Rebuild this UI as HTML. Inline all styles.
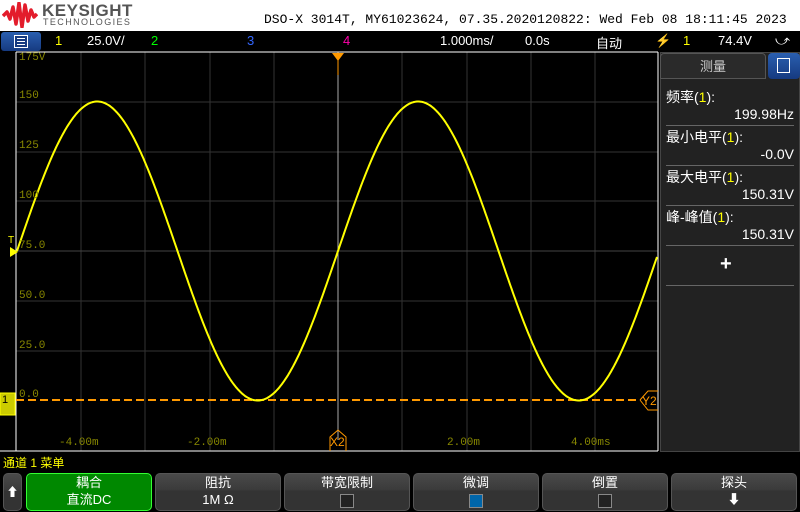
<!DOCTYPE html>
<html><head><meta charset="utf-8"><style>
*{margin:0;padding:0;box-sizing:border-box}
body{width:800px;height:512px;background:#000;position:relative;overflow:hidden;font-family:"Liberation Sans","Noto Sans CJK SC",sans-serif;color:#fff}
.a{position:absolute;white-space:nowrap}
.mono{font-family:"Liberation Mono","Noto Sans CJK SC",monospace}
.btn{position:absolute;top:473px;height:38px;background:linear-gradient(#4a4a4a,#3a3a3a 45%,#333 46%,#333);border:1px solid #555;border-radius:5px;text-align:center;font-size:13px;line-height:17px;color:#fff}
.chk{display:inline-block;width:14px;height:14px;border:1px solid #888;background:#222;vertical-align:middle}
.m{font-size:14px;position:absolute;left:666px}
.r{font-size:14px;position:absolute;right:6px}
.sep{position:absolute;left:666px;width:128px;height:1px;background:#666}
.lb{font-size:11px;color:#880}
</style></head><body>
<div class="a" style="left:0;top:0;width:800px;height:31px;background:#fff"></div>
<svg class="a" style="left:2px;top:2px" width="36" height="26" viewBox="0 0 34 26"><path d="M0 14 L4 10 L7 17 L10 5 L13 22 L16 1 L19 25 L22 3 L25 19 L28 8 L31 15 L34 12" stroke="#e31c2b" stroke-width="3.5" fill="none" stroke-linejoin="round"/></svg>
<div class="a" style="left:42px;top:1px;font-size:17px;font-weight:bold;color:#555;letter-spacing:0.5px">KEYSIGHT</div>
<div class="a" style="left:43px;top:17px;font-size:9px;color:#555;letter-spacing:1.4px">TECHNOLOGIES</div>
<div class="a mono" style="left:264px;top:12px;font-size:13px;color:#000">DSO-X 3014T, MY61023624, 07.35.2020120822: Wed Feb 08 18:11:45 2023</div>
<!-- top bar -->
<div class="a" style="left:1px;top:32px;width:40px;height:19px;background:linear-gradient(#2a5fb0,#163a80);border-radius:3px"></div>
<div class="a" style="left:14px;top:35px;width:14px;height:13px;border:1.5px solid #fff;background:#163a80"></div>
<div class="a" style="left:17px;top:38px;width:8px;height:7px;border-top:1px solid #fff;border-bottom:1px solid #fff"></div>
<div class="a" style="left:17px;top:41px;width:8px;height:1px;background:#fff"></div>
<div class="a" style="left:55px;top:33px;font-size:13px;color:#ff0">1</div>
<div class="a" style="left:87px;top:33px;font-size:13px">25.0V/</div>
<div class="a" style="left:151px;top:33px;font-size:13px;color:#0f0">2</div>
<div class="a" style="left:247px;top:33px;font-size:13px;color:#36f">3</div>
<div class="a" style="left:343px;top:33px;font-size:13px;color:#f0a">4</div>
<div class="a" style="left:440px;top:33px;font-size:13px">1.000ms/</div>
<div class="a" style="left:525px;top:33px;font-size:13px">0.0s</div>
<div class="a" style="left:596px;top:33px;font-size:13px">自动</div>
<div class="a" style="left:655px;top:33px;font-size:13px;color:#ff0">⚡</div>
<div class="a" style="left:683px;top:33px;font-size:13px;color:#ff0">1</div>
<div class="a" style="left:718px;top:33px;font-size:13px">74.4V</div>
<div class="a" style="left:775px;top:32px;font-size:14px">⤻</div>
<!-- plot -->
<svg class="a" style="left:0;top:0" width="800" height="512">
<g stroke="#333" stroke-width="1">
<line x1="81" y1="52" x2="81" y2="451"/><line x1="145" y1="52" x2="145" y2="451"/><line x1="210" y1="52" x2="210" y2="451"/><line x1="274" y1="52" x2="274" y2="451"/><line x1="402" y1="52" x2="402" y2="451"/><line x1="467" y1="52" x2="467" y2="451"/><line x1="531" y1="52" x2="531" y2="451"/><line x1="595" y1="52" x2="595" y2="451"/>
<line x1="16" y1="102" x2="658" y2="102"/><line x1="16" y1="152" x2="658" y2="152"/><line x1="16" y1="201" x2="658" y2="201"/><line x1="16" y1="301" x2="658" y2="301"/><line x1="16" y1="351" x2="658" y2="351"/>
<line x1="16" y1="251" x2="658" y2="251" stroke="#444"/>
</g>
<line x1="338" y1="52" x2="338" y2="440" stroke="#aaa"/>
<line x1="338" y1="52" x2="338" y2="75" stroke="#f90"/>
<polygon points="332,53 344,53 338,61" fill="#f90"/>
<line x1="16" y1="52" x2="658" y2="52" stroke="#fff"/>
<line x1="16" y1="52" x2="16" y2="451" stroke="#fff"/>
<line x1="658" y1="52" x2="658" y2="451" stroke="#fff"/>
<line x1="0" y1="451" x2="658" y2="451" stroke="#fff"/>
<line x1="16" y1="400" x2="640" y2="400" stroke="#f90" stroke-width="2" stroke-dasharray="8,4"/>
<polyline id="w" fill="none" stroke="#ff0" stroke-width="2"/>
<polygon points="10,247 18,252 10,257" fill="#ff0"/>
<path d="M640 400 L648 391 L658 391 M640 400 L648 410 L658 410" stroke="#f90" fill="none"/>
<path d="M330 451 L330 437 L338 430 L346 437 L346 451" stroke="#f90" fill="none"/>
<rect x="0" y="393" width="15" height="22" fill="#cc0" stroke="#ff0"/>
</svg>
<script>
var p=[];for(var x=17;x<=657;x++){var y=251-149.5*Math.sin(2*Math.PI*(x-338)/321);p.push(x+","+y.toFixed(1));}
document.getElementById('w').setAttribute('points',p.join(' '));
</script>
<div class="a mono lb" style="left:19px;top:52px">175V</div>
<div class="a mono lb" style="left:19px;top:90px">150</div>
<div class="a mono lb" style="left:19px;top:140px">125</div>
<div class="a mono lb" style="left:19px;top:190px">100</div>
<div class="a mono lb" style="left:19px;top:240px">75.0</div>
<div class="a mono lb" style="left:19px;top:290px">50.0</div>
<div class="a mono lb" style="left:19px;top:340px">25.0</div>
<div class="a mono lb" style="left:19px;top:389px">0.0</div>
<div class="a" style="left:8px;top:235px;font-size:10px;color:#ff0">T</div>
<div class="a" style="left:2px;top:394px;font-size:11px;color:#000">1</div>
<div class="a mono lb" style="left:59px;top:437px">-4.00m</div>
<div class="a mono lb" style="left:187px;top:437px">-2.00m</div>
<div class="a mono lb" style="left:447px;top:437px">2.00m</div>
<div class="a mono lb" style="left:571px;top:437px">4.00ms</div>
<div class="a" style="left:330px;top:435px;font-size:12px;color:#f90">X2</div>
<div class="a" style="left:642px;top:394px;font-size:12px;color:#f90">Y2</div>
<!-- right panel -->
<div class="a" style="left:660px;top:52px;width:140px;height:400px;background:#222;border:1px solid #444"></div>
<div class="a" style="left:660px;top:53px;width:106px;height:26px;background:#2a2a2a;border:1px solid #555;border-radius:4px 4px 0 0;text-align:center;font-size:13px;line-height:26px;color:#ccc">测量</div>
<div class="a" style="left:768px;top:53px;width:32px;height:26px;background:linear-gradient(#2a5fb0,#163a80);border-radius:4px"></div>
<div class="a" style="left:777px;top:58px;width:13px;height:15px;border:1.5px solid #fff"></div>
<div class="m" style="top:87px">频率(<span style="color:#ff0">1</span>):</div>
<div class="r" style="top:106px">199.98Hz</div>
<div class="sep" style="top:125px"></div>
<div class="m" style="top:127px">最小电平(<span style="color:#ff0">1</span>):</div>
<div class="r" style="top:146px">-0.0V</div>
<div class="sep" style="top:165px"></div>
<div class="m" style="top:167px">最大电平(<span style="color:#ff0">1</span>):</div>
<div class="r" style="top:186px">150.31V</div>
<div class="sep" style="top:205px"></div>
<div class="m" style="top:207px">峰-峰值(<span style="color:#ff0">1</span>):</div>
<div class="r" style="top:226px">150.31V</div>
<div class="sep" style="top:245px"></div>
<div class="a" style="left:720px;top:253px;font-size:20px;font-weight:bold">+</div>
<div class="sep" style="top:285px"></div>
<!-- bottom -->
<div class="a" style="left:3px;top:454px;font-size:12px;color:#ff0">通道 1 菜单</div>
<div class="btn" style="left:3px;width:19px;line-height:36px;font-size:12px">⬆</div>
<div class="btn" style="left:26px;width:126px;background:#080;border:1px solid #3f3">耦合<br>直流DC</div>
<div class="btn" style="left:155px;width:126px">阻抗<br>1M Ω</div>
<div class="btn" style="left:284px;width:126px">带宽限制<br><span class="chk"></span></div>
<div class="btn" style="left:413px;width:126px">微调<br><span class="chk" style="background:#06a"></span></div>
<div class="btn" style="left:542px;width:126px">倒置<br><span class="chk"></span></div>
<div class="btn" style="left:671px;width:126px">探头<br>⬇</div>
</body></html>
